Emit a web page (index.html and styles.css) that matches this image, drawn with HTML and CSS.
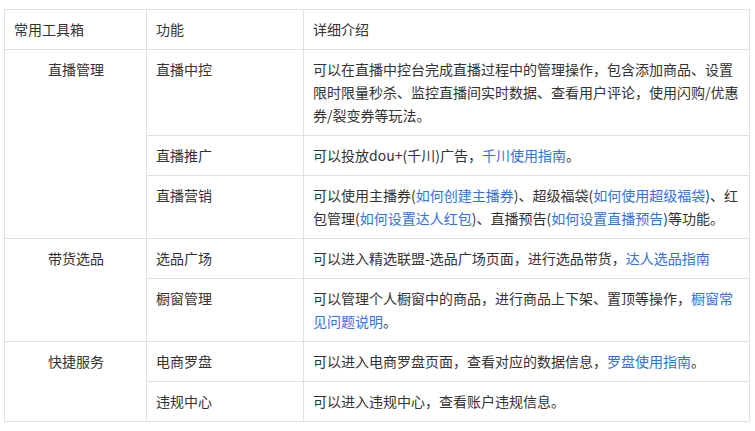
FILE: index.html
```html
<!DOCTYPE html>
<html lang="zh-CN">
<head>
<meta charset="utf-8">
<link rel="stylesheet" href="styles.css">
</head>
<body>
<table class="tools">
  <colgroup>
    <col class="c1"><col class="c2"><col class="c3">
  </colgroup>
  <thead>
    <tr><th>常用工具箱</th><th>功能</th><th>详细介绍</th></tr>
  </thead>
  <tbody>
    <tr>
      <td class="group" rowspan="3">直播管理</td>
      <td>直播中控</td>
      <td>可以在直播中控台完成直播过程中的管理操作，包含添加商品、设置限时限量秒杀、监控直播间实时数据、查看用户评论，使用闪购/优惠券/裂变券等玩法。</td>
    </tr>
    <tr>
      <td>直播推广</td>
      <td>可以投放dou+(千川)广告，<a href="#">千川使用指南</a>。</td>
    </tr>
    <tr>
      <td>直播营销</td>
      <td>可以使用主播券(<a href="#">如何创建主播券</a>)、超级福袋(<a href="#">如何使用超级福袋</a>)、红包管理(<a href="#">如何设置达人红包</a>)、直播预告(<a href="#">如何设置直播预告</a>)等功能。</td>
    </tr>
    <tr>
      <td class="group" rowspan="2">带货选品</td>
      <td>选品广场</td>
      <td>可以进入精选联盟-选品广场页面，进行选品带货，<a href="#">达人选品指南</a></td>
    </tr>
    <tr>
      <td>橱窗管理</td>
      <td>可以管理个人橱窗中的商品，进行商品上下架、置顶等操作，<a href="#">橱窗常见问题说明</a>。</td>
    </tr>
    <tr>
      <td class="group" rowspan="2">快捷服务</td>
      <td>电商罗盘</td>
      <td>可以进入电商罗盘页面，查看对应的数据信息，<a href="#">罗盘使用指南</a>。</td>
    </tr>
    <tr>
      <td>违规中心</td>
      <td>可以进入违规中心，查看账户违规信息。</td>
    </tr>
  </tbody>
</table>
</body>
</html>
```

FILE: styles.css
```css
html, body {
  margin: 0;
  padding: 0;
  background: #ffffff;
}

body {
  font-family: "Noto Sans CJK SC", "Noto Sans", sans-serif;
  font-size: 14px;
  line-height: 23px;
  color: #333333;
}

.tools {
  margin: 9px 0 0 4px;
  width: 745px;
  border-collapse: collapse;
  table-layout: fixed;
}

.c1 { width: 142px; }
.c2 { width: 157px; }
.c3 { width: 446px; }

.tools th,
.tools td {
  border: 1px solid #e0e0e0;
  padding: 8px 8px 8px 9px;
  text-align: left;
  vertical-align: top;
  font-weight: normal;
}

.tools td.group {
  text-align: center;
}

.tools a {
  color: #3471e0;
  text-decoration: none;
}
```
